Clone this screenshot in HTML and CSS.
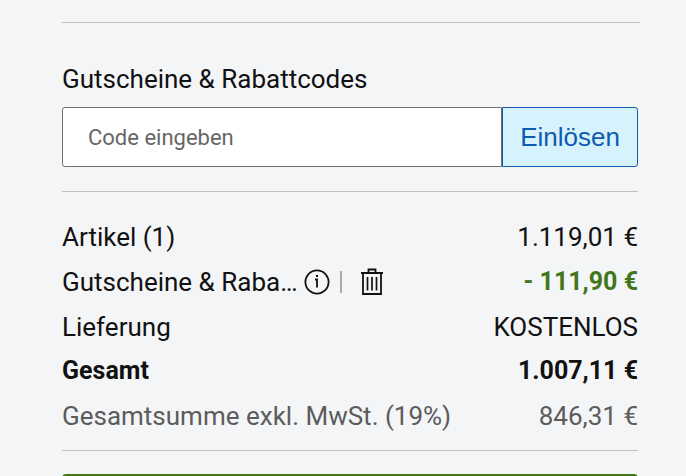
FILE: index.html
```html
<!DOCTYPE html>
<html lang="de">
<head>
<meta charset="utf-8">
<meta name="viewport" content="width=device-width, initial-scale=1">
<title>Warenkorb</title>
<link rel="stylesheet" href="styles.css">
</head>
<body>
<main class="summary">
  <hr class="rule rule-top">
  <form class="voucher">
    <label class="voucher-label" for="code">Gutscheine &amp; Rabattcodes</label>
    <div class="voucher-row">
      <input class="voucher-input" id="code" type="text" placeholder="Code eingeben">
      <button class="voucher-button" type="submit">Einlösen</button>
    </div>
  </form>
  <hr class="rule">
  <dl class="totals">
    <div class="line"><dt>Artikel (1)</dt><dd>1.119,01 €</dd></div>
    <div class="line">
      <dt class="with-actions">
        <span>Gutscheine &amp; Raba…</span>
        <button class="icon-button info" type="button" aria-label="Info">
          <svg width="26" height="26" viewBox="0 0 26 26" fill="none" stroke="#111" stroke-width="1.8"><circle cx="13" cy="13" r="11.600"/><path d="M11 10.500H13V18.500M12 7H14"/></svg>
        </button>
        <span class="divider"></span>
        <button class="icon-button trash" type="button" aria-label="Entfernen">
          <svg width="24" height="28" viewBox="0 0 24 28" fill="none" stroke="#111" stroke-width="1.8"><path d="M1 5H23M8.500 5V1.500H15.500V5M3 5V26H21V5"/><path d="M7.500 9V22.500M12 9V22.500M16.500 9V22.500" stroke-width="1.7"/></svg>
        </button>
      </dt>
      <dd class="discount">- 111,90 €</dd>
    </div>
    <div class="line"><dt>Lieferung</dt><dd>KOSTENLOS</dd></div>
    <div class="line total"><dt>Gesamt</dt><dd>1.007,11 €</dd></div>
    <div class="line net"><dt>Gesamtsumme exkl. MwSt. (19%)</dt><dd>846,31 €</dd></div>
  </dl>
  <hr class="rule">
  <div class="checkout"></div>
</main>
</body>
</html>
```
FILE: styles.css
```css
* { box-sizing: border-box; }
body { margin: 0; background: #f4f5f7; color: #111; font: 26px/32px Roboto, sans-serif; }
.summary { height: 100vh; padding: 22px 48px 0 62px; overflow: hidden; }
.rule { height: 1px; margin: 0; border: 0; background: #c0c1c3; }
.rule-top { margin-right: -2px; }
.voucher { padding: 40px 0 24px; }
.voucher-label { display: block; margin-bottom: 12px; }
.voucher-row { display: flex; height: 60px; }
.voucher-input { flex: 1; min-width: 0; padding: 0 25px; border: 1px solid #6f6f6f; border-radius: 3px 0 0 3px; background: #fff; font: 22px Roboto, sans-serif; color: #111; }
.voucher-input::placeholder { color: #666; opacity: 1; }
.voucher-button { width: 136px; padding: 0; border: 1px solid #0f5bb0; border-radius: 0 3px 3px 0; background: #d5f2fd; color: #0f5bb0; font: 26px "Liberation Sans", Arial, sans-serif; }
.totals { margin: 0; padding: 22px 0 12px; }
.line { display: flex; justify-content: space-between; height: 45px; align-items: center; }
dt, dd { margin: 0; white-space: nowrap; }
.with-actions { display: flex; align-items: center; }
.icon-button { display: flex; padding: 0; border: 0; background: none; }
.info { margin-left: 6px; }
.divider { width: 2px; height: 22px; margin: 0 18px 0 10px; background: #aaa; }
.discount { color: #41761c; font-size: 25px; font-weight: 700; }
.total { height: 44px; font-size: 25px; font-weight: 700; }
.net { color: #5c5c5c; }
.checkout { height: 60px; margin-top: 23px; border-radius: 4px; background: #41761c; }
```
